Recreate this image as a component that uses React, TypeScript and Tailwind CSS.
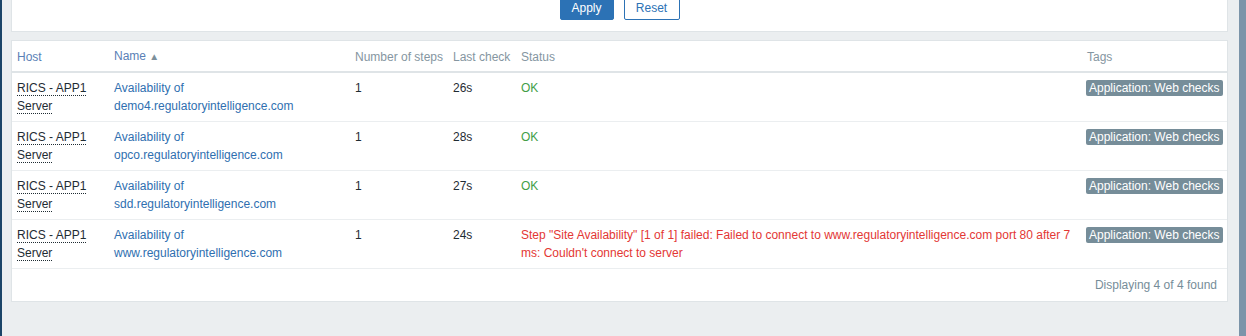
const rows = [
  { host: "demo4.regulatoryintelligence.com", check: "26s", ok: true },
  { host: "opco.regulatoryintelligence.com", check: "28s", ok: true },
  { host: "sdd.regulatoryintelligence.com", check: "27s", ok: true },
  { host: "www.regulatoryintelligence.com", check: "24s", ok: false },
];

export default function App() {
  return (
    <div className="flex h-[336px] w-[1246px] overflow-hidden bg-[#ebeef0] font-['Liberation_Sans',Arial,sans-serif] text-[12px] leading-[18px] text-[#1f2c33]">
      <div className="w-[2px] shrink-0 bg-[#1b4468]" />
      <div className="flex-1 pl-[9px] pr-[11px]">
        {/* Filter panel (cut off at the top) */}
        <div className="flex h-[32px] items-end justify-center gap-[10px] overflow-hidden border border-t-0 border-[#dfe4e7] bg-white pb-[11px]">
          <button className="h-[24px] w-[54px] shrink-0 rounded-[2px] border border-[#2c72b5] bg-[#2c72b5] text-[12px] text-white">
            Apply
          </button>
          <button className="h-[24px] w-[56px] shrink-0 rounded-[2px] border border-[#2c72b5] bg-white text-[12px] text-[#2c72b5]">
            Reset
          </button>
        </div>

        {/* Web monitoring table */}
        <div className="mt-[8px] border border-[#dfe4e7] bg-white">
          <table className="w-full table-fixed border-collapse text-left">
            <colgroup>
              <col className="w-[97px]" />
              <col className="w-[241px]" />
              <col className="w-[98px]" />
              <col className="w-[68px]" />
              <col className="w-[566px]" />
              <col />
            </colgroup>
            <thead>
              <tr className="border-b-2 border-[#dfe4e7] text-[#8596a1]">
                <th className="px-[5px] pb-[5px] pt-[6px] font-normal text-[#5a7fb6]">Host</th>
                <th className="px-[5px] pb-[5px] pt-[6px] font-normal text-[#5a7fb6]">
                  Name <span className="text-[10px] text-[#7d8f9a]">▲</span>
                </th>
                <th className="whitespace-nowrap px-[5px] pb-[5px] pt-[6px] font-normal">Number of steps</th>
                <th className="whitespace-nowrap px-[5px] pb-[5px] pt-[6px] font-normal">Last check</th>
                <th className="px-[5px] pb-[5px] pt-[6px] font-normal">Status</th>
                <th className="px-[5px] pb-[5px] pt-[6px] font-normal">Tags</th>
              </tr>
            </thead>
            <tbody>
              {rows.map((r) => (
                <tr key={r.host} className="border-b border-[#ebeef0] align-top">
                  <td className="px-[5px] py-[6px]">
                    <span className="border-b border-dotted border-[#1f2c33]">RICS - APP1</span>
                    <br />
                    <span className="border-b border-dotted border-[#1f2c33]">Server</span>
                  </td>
                  <td className="px-[5px] py-[6px] text-[#2f6fb0]">
                    Availability of
                    <br />
                    {r.host}
                  </td>
                  <td className="px-[5px] py-[6px]">1</td>
                  <td className="px-[5px] py-[6px]">{r.check}</td>
                  <td className="px-[5px] py-[6px]">
                    {r.ok ? (
                      <span className="text-[#429e47]">OK</span>
                    ) : (
                      <span className="text-[#e33734]">
                        Step "Site Availability" [1 of 1] failed: Failed to connect to www.regulatoryintelligence.com port 80 after 7 ms: Couldn't connect to server
                      </span>
                    )}
                  </td>
                  <td className="py-[6px] pl-[4px] pr-[5px]">
                    <span className="inline-block whitespace-nowrap rounded-[2px] bg-[#768d99] px-[3px] leading-[16px] text-white">
                      Application: Web checks
                    </span>
                  </td>
                </tr>
              ))}
            </tbody>
          </table>
          <div className="flex h-[32px] items-center justify-end pr-[10px] text-[#768d99]">
            Displaying 4 of 4 found
          </div>
        </div>
      </div>
      <div className="w-[7px] shrink-0 bg-[#7b94a9]" />
    </div>
  );
}
